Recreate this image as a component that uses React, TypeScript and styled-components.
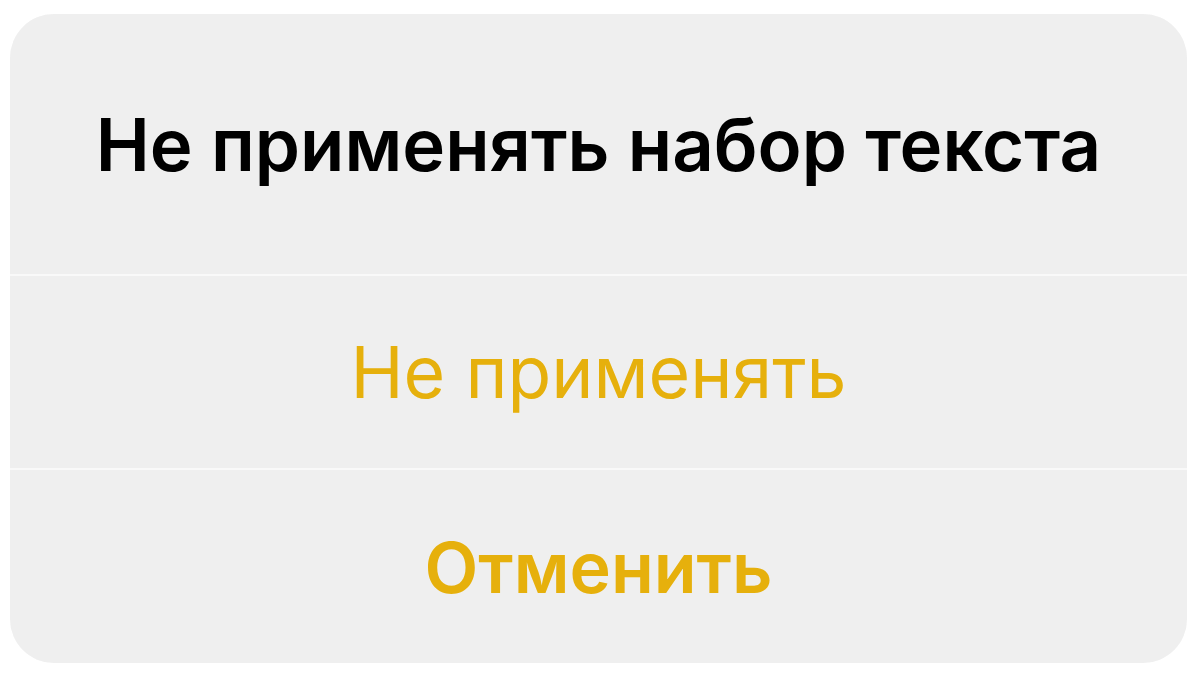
import React from "react";
import styled, { createGlobalStyle } from "styled-components";

const Global = createGlobalStyle`
  html, body {
    margin: 0;
    padding: 0;
    background: #ffffff;
  }
  body {
    font-family: Inter, "Liberation Sans", Arial, sans-serif;
    -webkit-font-smoothing: antialiased;
  }
`;

const Page = styled.div`
  width: 1200px;
  height: 676px;
  box-sizing: border-box;
  padding: 14px 13px 13px 10px;
  display: flex;
`;

const Sheet = styled.div`
  flex: 1;
  display: flex;
  flex-direction: column;
  gap: 2px;
  border-radius: 44px;
  overflow: hidden;
  background: #f9f9f9;
`;

const Section = styled.div<{ $h: number }>`
  height: ${(p) => p.$h}px;
  flex: none;
  display: flex;
  align-items: center;
  justify-content: center;
  background: #efefef;
`;

const Title = styled.div`
  font-size: 72.5px;
  font-weight: 600;
  color: #000000;
`;

const Action = styled.div<{ $bold?: boolean }>`
  font-size: ${(p) => (p.$bold ? 70 : 71.5)}px;
  font-weight: ${(p) => (p.$bold ? 600 : 400)};
  color: #e6b00c;
`;

export default function App() {
  return (
    <>
      <Global />
      <Page>
        <Sheet>
          <Section $h={260}>
            <Title>Не применять набор текста</Title>
          </Section>
          <Section $h={192}>
            <Action>Не применять</Action>
          </Section>
          <Section $h={195}>
            <Action $bold>Отменить</Action>
          </Section>
        </Sheet>
      </Page>
    </>
  );
}
